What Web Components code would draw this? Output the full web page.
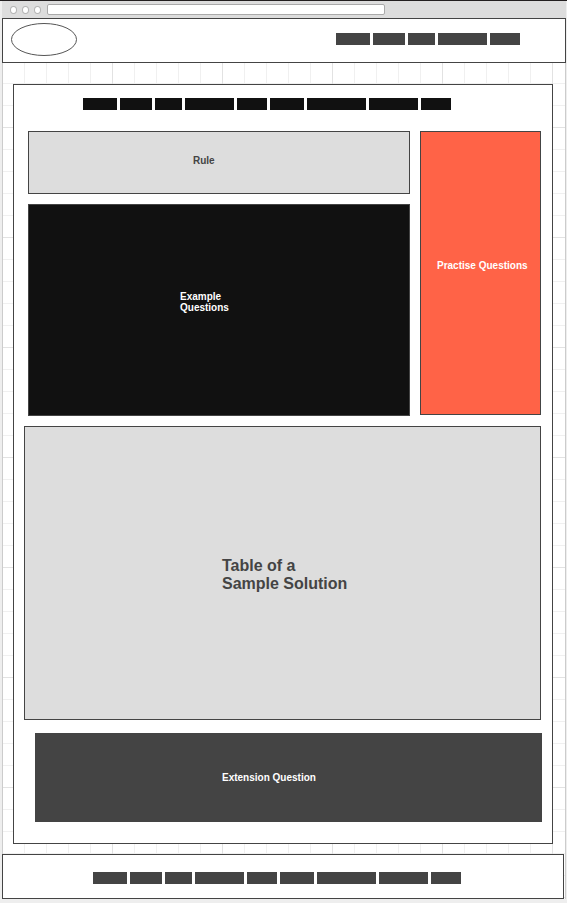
<!DOCTYPE html>
<html lang="en">
<head>
<meta charset="utf-8">
<meta name="viewport" content="width=device-width">
<title>Lesson wireframe</title>
<style>
  html { background: #eee; }
  body { margin: 0; font-family: "Liberation Sans", Arial, sans-serif; }
</style>
</head>
<body>
<wire-page></wire-page>

<script>
const define = (name, html, setup) => {
  const template = document.createElement('template');
  template.innerHTML = html;
  customElements.define(name, class extends HTMLElement {
    constructor() {
      super();
      this.attachShadow({ mode: 'open' }).append(template.content.cloneNode(true));
    }
    connectedCallback() { if (setup) setup(this); }
  });
};

// A line of solid bars standing for words; widths come from the "words" attribute.
define('wire-words', `
  <style>
    :host { display: flex; gap: 3px; height: 12px; }
    span { background: currentColor; }
  </style>`, host => {
  host.shadowRoot.querySelectorAll('span').forEach(s => s.remove());
  for (const width of host.getAttribute('words').split(' ')) {
    const bar = document.createElement('span');
    bar.style.width = width + 'px';
    host.shadowRoot.append(bar);
  }
});

define('wire-browser-bar', `
  <style>
    :host { display: flex; align-items: center; height: 17px; box-sizing: border-box;
            background: #ddd; padding: 0 8px; }
    .dots { display: flex; gap: 5px; margin-right: 6px; }
    .dots span { width: 7px; height: 8px; box-sizing: border-box; border: 1px solid #b4b4b4;
                 border-radius: 50%; background: #fff; }
    input { width: 338px; min-width: 0; height: 11px; box-sizing: border-box; margin: 0; padding: 0 4px;
            border: 1px solid #aaa; border-radius: 2px; background: #fff; font: 8px "Liberation Sans", sans-serif; }
  </style>
  <div class="dots"><span></span><span></span><span></span></div>
  <input type="text" aria-label="Address">`);

define('wire-header', `
  <style>
    :host { display: flex; align-items: flex-start; justify-content: space-between; height: 45px;
            box-sizing: border-box; border: 1px solid #444; background: #fff; color: #444;
            padding: 4px 45px 0 8px; }
    svg { display: block; width: 66px; height: 33px; }
    nav { padding-top: 10px; }
  </style>
  <svg viewBox="0 0 66 33" aria-hidden="true"><ellipse cx="33" cy="16.5" rx="32.5" ry="16" fill="#fff" stroke="#555"/></svg>
  <nav><slot></slot></nav>`);

define('wire-footer', `
  <style>
    :host { display: block; height: 45px; box-sizing: border-box; border: 1px solid #444;
            background: #fff; color: #444; padding: 17px 0 0 90px; margin-right: 2px; }
  </style>
  <slot></slot>`);

define('wire-panel', `
  <style>
    :host { display: flex; align-items: center; box-sizing: border-box; border: 1px solid #444;
            background: #ddd; color: #444; }
    :host([tone="black"]) { background: #111; color: #fff; }
    :host([tone="coral"]) { background: #ff6347; color: #fff; }
    :host([tone="dark"]) { background: #444; color: #fff; }
    h2 { margin: 0; font-size: 10px; line-height: 11px; font-weight: bold; white-space: nowrap; }
    :host([size="large"]) h2 { font-size: 16px; line-height: 18px; }
  </style>
  <h2><slot></slot></h2>`);

define('wire-page', `
  <style>
    :host { display: block; border-top: 1px solid #231f20; padding: 0 1px 4px 2px; }
    .canvas {
      background:
        repeating-linear-gradient(90deg, transparent 0 109px, #e2e2e2 109px 110px) 1px 0,
        repeating-linear-gradient(transparent 0 109px, #e2e2e2 109px 110px),
        repeating-linear-gradient(90deg, transparent 0 21px, #f0f0f0 21px 22px) 1px 0,
        repeating-linear-gradient(transparent 0 21px, #f0f0f0 21px 22px),
        #fff;
      box-shadow: inset 1px 0 #ccc, inset -1px 0 #ccc;
    }
    main { margin: 21px 13px 10px 11px; border: 1px solid #444; background: #fff;
           padding: 13px 11px 21px 10px; }
    main > wire-words { color: #111; padding-left: 59px; margin-bottom: 21px; }
    .top { display: grid; grid-template-columns: minmax(0, 382fr) minmax(0, 121fr);
           column-gap: 10px; margin-left: 4px; align-items: start; }
    .left { display: grid; row-gap: 10px; }
    .rule { height: 63px; padding-left: 164px; padding-bottom: 4px; }
    .example { height: 212px; padding-left: 151px; padding-bottom: 16px; }
    .practise { height: 284px; padding-left: 16px; padding-bottom: 16px; }
    .table { height: 294px; margin-top: 10px; padding-left: 197px; padding-top: 4px; }
    .extension { height: 89px; margin: 13px -1px 0 11px; padding-left: 186px; }
  </style>
  <wire-browser-bar></wire-browser-bar>
  <div class="canvas">
    <wire-header><wire-words words="34 32 27 49 30"></wire-words></wire-header>
    <main>
      <wire-words words="34 32 27 49 30 34 59 49 30"></wire-words>
      <div class="top">
        <div class="left">
          <wire-panel class="rule">Rule</wire-panel>
          <wire-panel class="example" tone="black">Example<br>Questions</wire-panel>
        </div>
        <wire-panel class="practise" tone="coral">Practise Questions</wire-panel>
      </div>
      <wire-panel class="table" size="large">Table of a<br>Sample Solution</wire-panel>
      <wire-panel class="extension" tone="dark">Extension Question</wire-panel>
    </main>
    <wire-footer><wire-words words="34 32 27 49 30 34 59 49 30"></wire-words></wire-footer>
  </div>`);
</script>
</body>
</html>
